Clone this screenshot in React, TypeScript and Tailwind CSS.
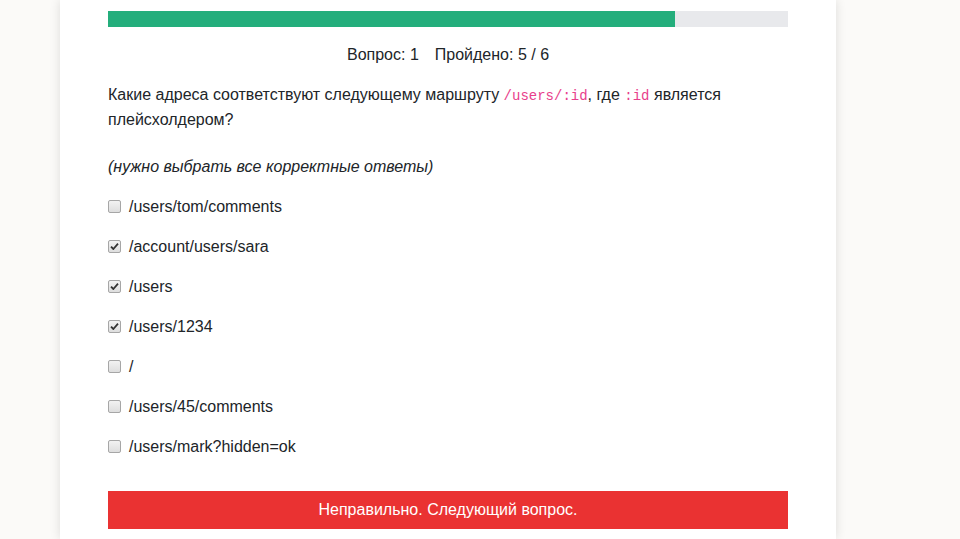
import React from 'react';

const answers = [
    { text: '/users/tom/comments', checked: false },
    { text: '/account/users/sara', checked: true },
    { text: '/users', checked: true },
    { text: '/users/1234', checked: true },
    { text: '/', checked: false },
    { text: '/users/45/comments', checked: false },
    { text: '/users/mark?hidden=ok', checked: false },
];

const Code = ({ children }: { children: React.ReactNode }) => (
    <code className="font-['Liberation_Mono','DejaVu_Sans_Mono',monospace] text-[14px] text-[#e83e8c]">{children}</code>
);

const Box = ({ checked }: { checked: boolean }) => (
    <span className="relative inline-block w-[13px] h-[13px] shrink-0">
        <input
            type="checkbox"
            defaultChecked={checked}
            className="appearance-none block w-[13px] h-[13px] rounded-[2px] border border-[#a6a6a6] bg-gradient-to-b from-[#f2f2f2] to-[#dedede] m-0"
        />
        {checked && (
            <svg className="absolute left-[2px] top-[2px] pointer-events-none" width="9" height="9" viewBox="0 0 9 9">
                <path d="M1 4.6 L3.4 7 L8 1.6" fill="none" stroke="#333" strokeWidth="1.8" strokeLinejoin="round" />
            </svg>
        )}
    </span>
);

export default function App() {
    return (
        <div className="min-h-[539px] bg-[#fbfaf8] font-['Liberation_Sans',Arial,sans-serif] text-[16px] text-[#212529]">
            <div className="ml-[60px] w-[776px] min-h-[539px] bg-white shadow-[0_0_10px_rgba(0,0,0,0.12)] px-[48px] pt-[11px]">
                {/* Progress */}
                <div className="h-[16px] bg-[#e8e9ec]">
                    <div className="h-full bg-[#24ae7c]" style={{ width: `${(5 / 6) * 100}%` }} />
                </div>

                <div className="flex justify-center gap-[16px] mt-[17px] leading-[22px]">
                    <span>Вопрос: 1</span>
                    <span>Пройдено: 5 / 6</span>
                </div>

                {/* Question */}
                <p className="mt-[17px] leading-[23px]">
                    Какие адреса соответствуют следующему маршруту <Code>/users/:id</Code>, где <Code>:id</Code> является
                    плейсхолдером?
                </p>

                <p className="mt-[24px] italic leading-[23px]">(нужно выбрать все корректные ответы)</p>

                <div className="mt-[17px] flex flex-col gap-[17px]">
                    {answers.map((a, i) => (
                        <label key={i} className="flex items-center gap-[8px] leading-[23px]">
                            <Box checked={a.checked} />
                            <span>{a.text}</span>
                        </label>
                    ))}
                </div>

                <button className="mt-[33px] w-full h-[38px] bg-[#ea3232] text-white text-[16px]">
                    Неправильно. Следующий вопрос.
                </button>
            </div>
        </div>
    );
}
